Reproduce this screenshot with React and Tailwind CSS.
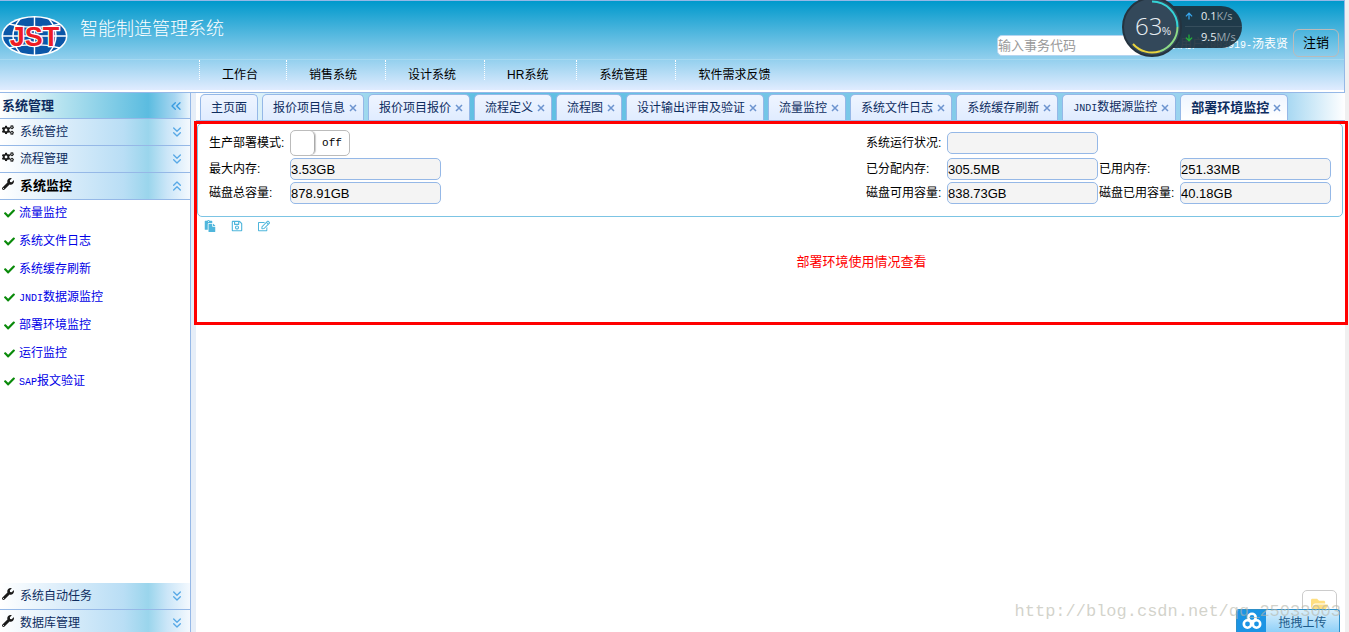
import { ChevronsDown, ChevronsLeft, ChevronsUp } from 'lucide-react';
import { FaArrowDown, FaArrowUp, FaCheck, FaCogs, FaFolderOpen, FaPaste, FaRegEdit, FaRegSave, FaWrench } from 'react-icons/fa';

const MENUS = ['工作台', '销售系统', '设计系统', 'HR系统', '系统管理', '软件需求反馈'];

const TABS = [
  '报价项目信息',
  '报价项目报价',
  '流程定义',
  '流程图',
  '设计输出评审及验证',
  '流量监控',
  '系统文件日志',
  '系统缓存刷新',
  'JNDI数据源监控',
  '部署环境监控',
];

const LINKS = ['流量监控', '系统文件日志', '系统缓存刷新', 'JNDI数据源监控', '部署环境监控', '运行监控', 'SAP报文验证'];

// Latin letters are half the width of a Chinese character
function Mixed({ text }) {
  const latin = text.match(/^[A-Z]*/)[0];
  return (
    <>
      {latin && <span className="font-['Liberation_Mono',monospace] text-[10px]">{latin}</span>}
      {text.slice(latin.length)}
    </>
  );
}

function Logo() {
  return (
    <svg viewBox="0 0 68 42" className="h-[42px] w-[68px] shrink-0" role="img" aria-label="JST">
      <ellipse cx="34.500" cy="21" rx="33" ry="20" fill="#fff" />
      <ellipse cx="34.500" cy="21" rx="31.500" ry="18.500" fill="#0b57a8" />
      <g fill="none" stroke="#fff" strokeWidth="1.400">
        <path d="M34.500 1v40M2 21h65" />
        <path d="M9 9q25.500 7 51 0M9 33q25.500-7 51 0" />
        <path d="M20 4q-14 17 0 34M49 4q14 17 0 34" />
      </g>
      <g fontFamily="Liberation Sans, sans-serif" fontWeight="bold" fontSize="27" textAnchor="middle">
        <text
          x="34.500"
          y="30.500"
          fill="#ee1c25"
          stroke="#fff"
          strokeWidth="2.400"
          paintOrder="stroke"
        >
          JST
        </text>
      </g>
    </svg>
  );
}

function Header() {
  return (
    <header className="border border-l-0 border-[#95b8e7] bg-white pb-[2px]">
      <div className="bg-[linear-gradient(180deg,#0099cc_0%,#e0ecff_100%)]">
        <div className="flex h-[59px] items-center border-b border-[#a6d9f1] pr-[5px]">
          <div className="flex flex-1 items-center pt-3">
            <Logo />
            <h1 className="mb-[14px] ml-3 text-[18px] leading-6 font-light text-white">智能制造管理系统</h1>
          </div>
          <form className="flex items-center pt-[26px]">
            <input
              type="text"
              aria-label="事务代码"
              placeholder="输入事务代码"
              className="mt-1 h-[21px] w-[150px] rounded-[5px] border border-[#b5d5f0] bg-white text-[13px] placeholder:text-[#999]"
            />
            <span className="ml-[9px] w-[132px] pt-[2px] text-xs whitespace-nowrap text-white">
              登录用户<span className="font-['Liberation_Mono',monospace] text-[10px]">:003919-</span>汤表贤
            </span>
            <button type="button" className="ml-[5px] h-7 w-[46px] rounded-md border border-[#bbb] text-[13px] text-black">
              注销
            </button>
          </form>
        </div>
        <nav className="flex h-[30px] pl-[199px]">
          {MENUS.map((menu) => (
            <a
              key={menu}
              href="#"
              className="h-5 border-l border-dotted border-white pt-[6px] pr-7 pl-[22px] text-xs leading-[18px] whitespace-nowrap text-black"
            >
              {menu}
            </a>
          ))}
        </nav>
      </div>
    </header>
  );
}

function SideItem({ title, icon: Icon, open }) {
  const Chevron = open ? ChevronsUp : ChevronsDown;
  return (
    <button
      type="button"
      className="flex h-[27px] w-full shrink-0 items-center border-b border-[#95b8e7] bg-[linear-gradient(90deg,#fff_0%,#d9ecfa_35%,#b9def5_65%,#9ad5ec_78%,#cbe6f8_88%,#f4f9fe_100%)] pr-[5px] pl-[2px] text-left"
    >
      <Icon className="mb-1 h-3 w-3 text-[#1a1a1a]" />
      <span className={open ? 'ml-[6px] flex-1 text-[13px] font-bold text-black' : 'ml-[6px] flex-1 text-xs text-[#0e2d5f]'}>{title}</span>
      <Chevron className="size-4 text-[#58a9e6]" strokeWidth={2} />
    </button>
  );
}

function Sidebar() {
  return (
    <aside className="-mb-[5px] flex w-[191px] shrink-0 flex-col border-r border-[#95b8e7]">
      <div className="flex h-[26px] shrink-0 items-center border-b border-[#95b8e7] bg-[linear-gradient(90deg,#fff_0%,#b4e2ef_33%,#5bbce0_78%,#a8d6f1_92%,#eaf5fd_100%)] pr-[6px] pl-[2px]">
        <h2 className="flex-1 text-[13px] font-bold text-[#0e2d5f]">系统管理</h2>
        <button type="button" aria-label="收起">
          <ChevronsLeft className="size-4 text-[#3a9ce0]" strokeWidth={2} />
        </button>
      </div>
      <SideItem title="系统管控" icon={FaCogs} />
      <SideItem title="流程管理" icon={FaCogs} />
      <SideItem title="系统监控" icon={FaWrench} open />
      <ul className="flex flex-1 flex-col gap-1 pt-px">
        {LINKS.map((link) => (
          <li key={link} className="flex h-6 items-center gap-1 pl-1">
            <FaCheck className="size-[11px] text-[#0a8a0a]" />
            <a href="#" className="text-xs text-[#0000e6]">
              <Mixed text={link} />
            </a>
          </li>
        ))}
      </ul>
      <SideItem title="系统自动任务" icon={FaWrench} />
      <SideItem title="数据库管理" icon={FaWrench} />
    </aside>
  );
}

function TabBar() {
  return (
    <div className="flex h-7 items-end gap-1 border-b border-[#95b8e7] bg-[linear-gradient(90deg,#fff_0%,#5bbde2_25%,#8fcfec_78%,#a8d8f2_95%,#fff_100%)] pl-1">
      <button type="button" className="h-[26px] rounded-t-[5px] border border-b-0 border-[#95b8e7] bg-linear-to-b from-[#eff5ff] to-[#e0ecff] px-[10px] text-xs whitespace-nowrap text-[#0e2d5f]">
        主页面
      </button>
      {TABS.map((tab, i) => {
        const active = i === TABS.length - 1;
        return (
          <div
            key={tab}
            className={`flex h-[26px] items-center rounded-t-[5px] border border-b-0 border-[#95b8e7] pr-[6px] pl-[10px] whitespace-nowrap text-[#0e2d5f] ${
              active ? 'bg-linear-to-b from-[#eff5ff] to-white' : 'bg-linear-to-b from-[#eff5ff] to-[#e0ecff]'
            }`}
          >
            <button type="button" className={active ? 'text-[13px] font-bold' : 'text-xs'}>
              <Mixed text={tab} />
            </button>
            <button type="button" aria-label={`关闭${tab}`} className="ml-1 w-2 pt-px">
              <svg viewBox="0 0 8 8" className="size-2" fill="none" stroke="#6d94cf" strokeWidth="1.500">
                <path d="M1 1l6 6M7 1L1 7" />
              </svg>
            </button>
          </div>
        );
      })}
    </div>
  );
}

function Field({ id, label, value }) {
  return (
    <div className="flex items-center">
      <label htmlFor={id} className="w-[81px] shrink-0 text-xs whitespace-nowrap text-black">
        {label}:
      </label>
      <input
        id={id}
        type="text"
        readOnly
        defaultValue={value}
        className="h-[22px] w-[151px] rounded-[5px] border border-[#95b8e7] bg-[#f4f4f4] font-['Liberation_Sans',sans-serif] text-[13px] text-black"
      />
    </div>
  );
}

function EnvPanel() {
  return (
    <section className="mx-px mt-[2px] mr-[2px] rounded-[5px] border border-[#7cc4e4] px-[11px] pt-[6px] pb-3">
      <div className="grid grid-cols-[1fr_233px_232px] gap-y-[2px]">
        <div className="flex items-center">
          <label htmlFor="mode" className="w-[81px] text-xs whitespace-nowrap text-black">
            生产部署模式:
          </label>
          <span className="relative flex h-[26px] w-[60px] rounded-[5px] border border-[#bbb] bg-white">
            <span className="w-6 rounded-[5px] border-r border-[#aaa] shadow-[1px_0_1px_#ccc]"></span>
            <span className="flex-1 text-center font-['Liberation_Mono',monospace] text-[11px] leading-6 text-black">off</span>
            <input id="mode" type="checkbox" role="switch" className="absolute inset-0 opacity-0" />
          </span>
        </div>
        <Field id="status" label="系统运行状况" value="" />
        <div></div>
        <Field id="max-memory" label="最大内存" value="3.53GB" />
        <Field id="allocated-memory" label="已分配内存" value="305.5MB" />
        <Field id="used-memory" label="已用内存" value="251.33MB" />
        <Field id="disk-total" label="磁盘总容量" value="878.91GB" />
        <Field id="disk-free" label="磁盘可用容量" value="838.73GB" />
        <Field id="disk-used" label="磁盘已用容量" value="40.18GB" />
      </div>
    </section>
  );
}

function SpeedWidget() {
  return (
    <div className="absolute -top-[3px] right-[107px] flex items-center">
      <svg viewBox="0 0 60 60" className="z-10 size-[60px]" role="img" aria-label="63%">
        <circle cx="30" cy="30" r="29" fill="#33485a" stroke="#25333f" strokeWidth="2" />
        <path d="M30 4.500A25.500 25.500 0 0 1 55.500 30" fill="none" stroke="#35d3d6" strokeWidth="2" />
        <path d="M55.500 30A25.500 25.500 0 0 1 38 54.200" fill="none" stroke="#8edb86" strokeWidth="2" />
        <path d="M38 54.200A25.500 25.500 0 0 1 11 47" fill="none" stroke="#e8d33e" strokeWidth="2" />
        <text x="13" y="38" fontFamily="Open Sans, sans-serif" fontWeight="300" fontSize="24" fill="#e8eef2">
          63
        </text>
        <text x="40" y="38" fontFamily="Liberation Sans, sans-serif" fontSize="10" fill="#e8eef2">
          %
        </text>
      </svg>
      <div className="-ml-[14px] flex h-[42px] w-[74px] flex-col rounded-r-[21px] bg-[#1d2d3a]/90 pl-[17px] font-['Open_Sans',sans-serif] text-[11px] text-[#e8eef2]">
        <div className="flex h-[21px] items-center border-b border-white/10">
          <FaArrowUp className="mr-2 size-2 text-[#38a9f0]" />
          0.1<span className="text-[#9aa7b0]">K/s</span>
        </div>
        <div className="flex h-[21px] items-center">
          <FaArrowDown className="mr-2 size-2 text-[#23b23c]" />
          9.5<span className="text-[#9aa7b0]">M/s</span>
        </div>
      </div>
    </div>
  );
}

function UploadWidget() {
  return (
    <div className="absolute right-[9px] bottom-0 flex flex-col items-end">
      <button type="button" aria-label="打开文件夹" className="mr-[3px] -mb-[5px] flex h-6 w-[35px] justify-center rounded-[5px] border border-[#ccc] bg-white pt-[5px]">
        <FaFolderOpen className="size-[17px] text-[#ffdf80]" />
      </button>
      <button type="button" className="relative flex h-[23px] w-[104px] overflow-hidden rounded-t-[3px] border border-b-0 border-[#2e8fc8] bg-linear-to-b from-[#d8effc] to-[#8fd0f8] text-xs text-[#1d5c8c]">
        <span className="flex h-full w-[29px] items-center justify-center bg-[#1b94e4]">
          <svg viewBox="0 0 20 18" className="h-[18px] w-5" fill="none" stroke="#fff" strokeWidth="2.600">
            <circle cx="10" cy="5.500" r="3.700" />
            <circle cx="5.500" cy="12" r="3.700" />
            <circle cx="14.500" cy="12" r="3.700" />
          </svg>
        </span>
        <span className="flex-1 pt-1 text-center leading-[18px]">拖拽上传</span>
      </button>
    </div>
  );
}

export default function App() {
  return (
    <div className="relative h-screen overflow-hidden bg-[#f0f0f0] pr-1 font-['Liberation_Sans','Noto_Sans_CJK_SC',sans-serif]">
      <div className="flex h-full flex-col bg-white">
        <Header />
        <div className="flex min-h-0 flex-1">
          <Sidebar />
          <div className="w-[5px] shrink-0 bg-[#e6eef8]"></div>
          <main className="relative min-w-0 flex-1">
            <TabBar />
            <EnvPanel />
            <div className="flex gap-[15px] pt-[3px] pl-2 text-xs text-[#4fb6dc]">
              <button type="button" aria-label="粘贴">
                <FaPaste />
              </button>
              <button type="button" aria-label="保存">
                <FaRegSave />
              </button>
              <button type="button" aria-label="编辑">
                <FaRegEdit />
              </button>
            </div>
            <p className="pt-5 pl-[182px] text-center text-[13px] leading-5 text-[#ff0000]">部署环境使用情况查看</p>
            <div className="pointer-events-none absolute top-7 -right-[3px] -left-[2px] h-[204px] border-[3px] border-[#ff0000]"></div>
          </main>
        </div>
      </div>
      <SpeedWidget />
      <UploadWidget />
      <p className="pointer-events-none absolute right-2 bottom-2 font-['Liberation_Mono',monospace] text-[17px] leading-6 text-[#b5b5a8]/60">
        http://blog.csdn.net/qq_25033003
      </p>
    </div>
  );
}
